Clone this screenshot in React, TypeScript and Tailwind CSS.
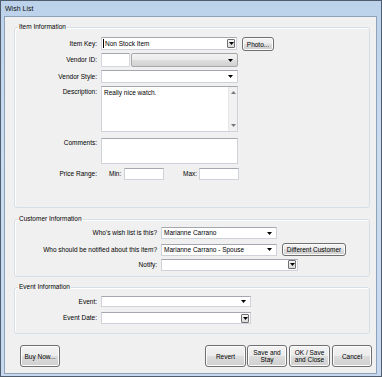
import React from "react";

function Arrow({ up = false, color = "#000" }: { up?: boolean; color?: string }) {
  return (
    <svg width="5" height="3" viewBox="0 0 5 3" className="block">
      <path d={up ? "M0 3H5L2.5 0Z" : "M0 0H5L2.5 3Z"} fill={color} />
    </svg>
  );
}

function BoxArrow() {
  return (
    <div className="w-[8px] h-[9px] border border-[#6f6f6f] rounded-[1px] bg-[linear-gradient(180deg,#f6f6f6,#d9d9d9)] flex items-center justify-center shrink-0">
      <Arrow />
    </div>
  );
}

function Combo({
  cls,
  value,
  kind = "plain",
  caret = false,
}: {
  cls: string;
  value?: string;
  kind?: "plain" | "boxed";
  caret?: boolean;
}) {
  return (
    <div
      className={`flex items-center bg-white border border-[#cfd3d9] border-t-[#a4a8ae] shrink-0 ${cls}`}
    >
      <div className="flex-1 flex items-center pl-[1px] overflow-hidden whitespace-nowrap">
        {caret && <span className="w-[1px] h-[9px] bg-black mr-[1px] shrink-0" />}
        <span className={caret ? "" : "pl-[1px]"}>{value}</span>
      </div>
      {kind === "plain" ? (
        <div className="pr-[4px]">
          <Arrow />
        </div>
      ) : (
        <div className="pr-[1px]">
          <BoxArrow />
        </div>
      )}
    </div>
  );
}

function Btn({ cls, children }: { cls: string; children: React.ReactNode }) {
  return (
    <div
      className={`flex items-center justify-center text-center border border-[#707070] rounded-[3px] bg-[linear-gradient(180deg,#f3f3f3_0%,#ebebeb_50%,#dddddd_50%,#cfcfcf_100%)] shadow-[inset_0_0_0_1px_#fcfcfc] shrink-0 leading-[7px] ${cls}`}
    >
      {children}
    </div>
  );
}

function Label({ cls, children }: { cls: string; children: React.ReactNode }) {
  return <div className={`text-right shrink-0 mr-[4px] whitespace-nowrap ${cls}`}>{children}</div>;
}

export default function App() {
  return (
    <div className="w-[382px] h-[377px] overflow-hidden border border-[#4f5d6e] bg-[linear-gradient(180deg,#bcd2ea_0%,#cadcf0_40%,#c6d9ee_100%)] flex flex-col font-['Liberation_Sans',Arial,sans-serif] text-[6.5px] leading-[8px] text-black">
      {/* title bar */}
      <div className="h-[15px] pl-[4px] flex items-center text-[7px] text-[#111]">Wish List</div>

      {/* client area */}
      <div className="ml-[3px] w-[373px] h-[358px] bg-[#f0f0f0] border border-[#8ea2ba] flex flex-col">
        {/* Item Information */}
        <fieldset className="ml-[9px] mt-[6px] w-[356px] border border-[#d5dfe5] rounded-[3px] shadow-[inset_1px_1px_0_#fff] pb-[27px]">
          <legend className="ml-[3px] px-[1px] leading-[8px]">Item Information</legend>

          {/* Item Key */}
          <div className="mt-[6px] h-[14px] flex items-start">
            <Label cls="w-[82px] h-[13px] flex items-center justify-end">Item Key:</Label>
            <Combo cls="w-[136px] h-[13px] border-[#9aa0a8]" value="Non Stock Item" kind="boxed" caret />
            <Btn cls="ml-[5px] w-[32px] h-[14px]">Photo...</Btn>
          </div>

          {/* Vendor ID */}
          <div className="mt-[2px] h-[14px] flex items-center">
            <Label cls="w-[82px]">Vendor ID:</Label>
            <div className="w-[29px] h-[14px] bg-white border border-[#d5d9de] border-t-[#a4a8ae] shrink-0" />
            <div className="ml-[1px] w-[107px] h-[14px] border border-[#a8a8a8] rounded-[2px] bg-[linear-gradient(180deg,#f3f3f3_0%,#ebebeb_50%,#dedede_50%,#d2d2d2_100%)] flex items-center justify-end pr-[4px] shrink-0">
              <Arrow />
            </div>
          </div>

          {/* Vendor Style */}
          <div className="mt-[3px] h-[13px] flex items-center">
            <Label cls="w-[82px]">Vendor Style:</Label>
            <Combo cls="w-[137px] h-[13px]" />
          </div>

          {/* Description */}
          <div className="mt-[3px] h-[46px] flex items-start">
            <Label cls="w-[82px] pt-[2px]">Description:</Label>
            <div className="w-[137px] h-[46px] bg-white border border-[#cfd3d9] border-t-[#a4a8ae] flex shrink-0">
              <div className="flex-1 pl-[2px] pt-[2px]">Really nice watch.</div>
              <div className="w-[9px] h-full bg-[#f1f1f1] border-l border-[#e6e6e6] flex flex-col items-center justify-between py-[4px]">
                <Arrow up color="#7a7a7a" />
                <Arrow color="#7a7a7a" />
              </div>
            </div>
          </div>

          {/* Comments */}
          <div className="mt-[6px] h-[26px] flex items-start">
            <Label cls="w-[82px] pt-[1px]">Comments:</Label>
            <div className="w-[137px] h-[26px] bg-white border border-[#cfd3d9] border-t-[#a4a8ae] shrink-0" />
          </div>

          {/* Price Range */}
          <div className="mt-[4px] h-[12px] flex items-center">
            <Label cls="w-[82px]">Price Range:</Label>
            <span className="ml-[8px] w-[15px] shrink-0">Min:</span>
            <div className="w-[40px] h-[12px] bg-white border border-[#cfd3d9] border-t-[#a4a8ae] shrink-0" />
            <span className="ml-[19px] w-[16px] shrink-0">Max:</span>
            <div className="w-[40px] h-[12px] bg-white border border-[#cfd3d9] border-t-[#a4a8ae] shrink-0" />
          </div>
        </fieldset>

        {/* Customer Information */}
        <fieldset className="ml-[9px] mt-[7px] w-[356px] border border-[#d5dfe5] rounded-[3px] shadow-[inset_1px_1px_0_#fff] pb-[6px]">
          <legend className="ml-[3px] px-[1px] leading-[8px]">Customer Information</legend>

          <div className="mt-[4px] h-[12px] flex items-center">
            <Label cls="w-[142px]">Who&apos;s wish list is this?</Label>
            <Combo cls="w-[116px] h-[12px]" value="Marianne Carrano" />
          </div>

          <div className="mt-[4px] h-[13px] flex items-center">
            <Label cls="w-[142px]">Who should be notified about this item?</Label>
            <Combo cls="w-[116px] h-[12px]" value="Marianne Carrano - Spouse" />
            <Btn cls="ml-[5px] w-[64px] h-[13px]">Different Customer</Btn>
          </div>

          <div className="mt-[3px] h-[11px] flex items-center">
            <Label cls="w-[142px]">Notify:</Label>
            <Combo cls="w-[137px] h-[12px]" kind="boxed" />
          </div>
        </fieldset>

        {/* Event Information */}
        <fieldset className="ml-[9px] mt-[6px] w-[356px] border border-[#d5dfe5] rounded-[3px] shadow-[inset_1px_1px_0_#fff] pb-[9px]">
          <legend className="ml-[3px] px-[1px] leading-[8px]">Event Information</legend>

          <div className="mt-[5px] h-[11px] flex items-center">
            <Label cls="w-[82px]">Event:</Label>
            <Combo cls="w-[150px] h-[11px]" />
          </div>

          <div className="mt-[5px] h-[12px] flex items-center">
            <Label cls="w-[82px]">Event Date:</Label>
            <Combo cls="w-[150px] h-[12px] border-[#9aa0a8]" kind="boxed" />
          </div>
        </fieldset>

        {/* Buttons */}
        <div className="mt-[11px] h-[22px] flex">
          <Btn cls="ml-[15px] w-[40px] h-[22px]">Buy Now...</Btn>
          <Btn cls="ml-[145px] w-[41px] h-[22px]">Revert</Btn>
          <Btn cls="ml-[1px] w-[40px] h-[22px]">
            Save and
            <br />
            Stay
          </Btn>
          <Btn cls="ml-[2px] w-[41px] h-[22px]">
            OK / Save
            <br />
            and Close
          </Btn>
          <Btn cls="ml-[2px] w-[40px] h-[22px]">Cancel</Btn>
        </div>
      </div>
    </div>
  );
}
